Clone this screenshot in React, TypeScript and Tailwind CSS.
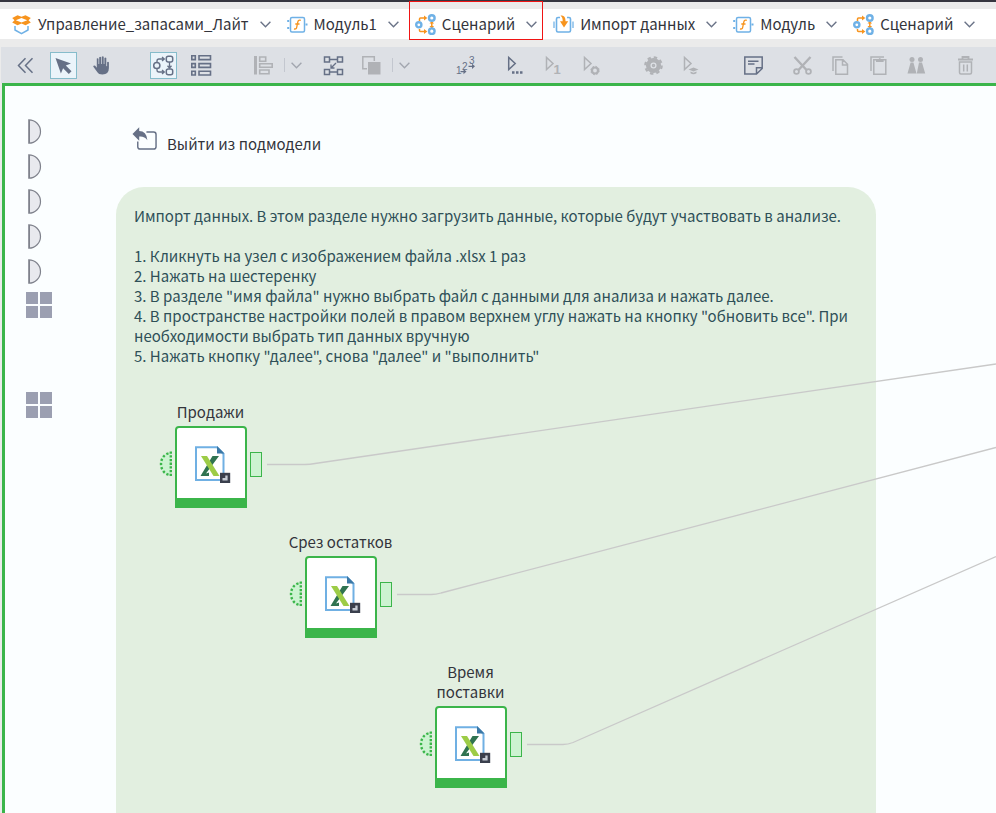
import type { ReactNode } from "react";
import clsx from "clsx";

/* ---------- breadcrumb icons ---------- */

function PackageIcon() {
  return (
    <svg width="21" height="21" viewBox="0 0 21 21" fill="none">
      <path d="M4 12v4l6.500 3.700L17 16v-4" stroke="#6fb1e6" strokeWidth="1.5" strokeLinejoin="round" />
      <path d="m10.500 2.800-4-1.600L1.200 3.900l2.300 2.300-2.300 2.400 5.300 2.700 4-1.800 4 1.800 5.300-2.700-2.300-2.400 2.300-2.300-5.300-2.700z" fill="#f7941e" />
      <path d="m4.800 6.200 5.700-2.300 5.700 2.300-5.700 2.300z" fill="#fff" />
    </svg>
  );
}

function ModuleIcon() {
  return (
    <svg width="21" height="21" viewBox="0 0 21 21" fill="none">
      <rect x="3.5" y="3.5" width="14" height="14.5" rx="1.5" stroke="#6fb1e6" strokeWidth="1.5" />
      <path d="M.2 7h2M.2 14h2M18.5 10.5h2" stroke="#6fb1e6" strokeWidth="2" />
      <path d="M13.8 6.3c-2.2-.7-2.8.5-3.2 2.500l-.8 4c-.3 1.800-1 2.600-2.800 2M8.300 10h4.200" stroke="#f7941e" strokeWidth="1.3" />
    </svg>
  );
}

function ScenarioIcon() {
  return (
    <svg width="21" height="21" viewBox="0 0 21 21" fill="none">
      <path d="M4.500 7V5q0-1 1-1H10M4.500 15v1.500q0 1 1 1H10M16.800 8v5.500" stroke="#f7941e" strokeWidth="1.500" />
      <path d="M9 1.500 12.300 4 9 6.500zM9 15l3.300 2.500L9 20zM14.500 9.500h4.600L16.800 7zM14.500 12h4.600l-2.300 2.600z" fill="#f7941e" />
      <g stroke="#6fb1e6" strokeWidth="2.400" fill="#fff">
        <circle cx="3.800" cy="10.800" r="2.600" />
        <circle cx="16.800" cy="4" r="2.800" />
        <circle cx="16.800" cy="17.200" r="2.800" />
      </g>
    </svg>
  );
}

function ImportIcon() {
  return (
    <svg width="21" height="21" viewBox="0 0 21 21" fill="none">
      <path d="M7 3.500H5Q3.500 3.500 3.500 5v11.500Q3.500 18 5 18h11q1.500 0 1.500-1.500V5q0-1.500-1.500-1.500h-2" stroke="#6fb1e6" strokeWidth="1.600" />
      <path d="M1 7.500v6.500M20 7.500v6.500" stroke="#9cc9ee" strokeWidth="1.800" />
      <path d="M7.500 1.500c3.800 0 5 1.700 5 5.700h2.700L11 13.500 7 7.200h2.700c0-3-.5-4-2.200-5.700z" fill="#f7941e" />
    </svg>
  );
}

function Chevron({ className }: { className?: string }) {
  return (
    <svg width="11" height="7" viewBox="0 0 11 7" fill="none" stroke="currentColor" strokeWidth="1.4" className={className}>
      <path d="M.6.8 5.500 5.700 10.400.8" />
    </svg>
  );
}

/* ---------- toolbar icons, all on a 21px grid ---------- */

function Icon({ children, solid }: { children: ReactNode; solid?: boolean }) {
  return (
    <svg
      width="21"
      height="21"
      viewBox="0 0 21 21"
      fill={solid ? "currentColor" : "none"}
      stroke={solid ? "none" : "currentColor"}
      strokeWidth="1.5"
      className="shrink-0 overflow-visible font-['Liberation_Sans',sans-serif]"
    >
      {children}
    </svg>
  );
}

const collapse = <Icon><path d="M10.500 3.300 3.500 10.500l7 7.200M17.500 3.300l-7 7.200 7 7.200" /></Icon>;

const pointer = <Icon solid><path d="M2.500 3 18 8.600l-5.200 2 5.700 5.700-2.700 2.700-5.700-5.800-2.200 5.300z" /></Icon>;

const hand = (
  <Icon solid>
    <path d="M5.800 3.500q1-.8 1.700.2V9h.7V2.300q1-1 1.900 0V9h.7V1.800q1-1 1.900 0V9h.7V3q1-1 1.900 0v8.300l.8-.3V7.300q.9-1 1.800 0v5.800q0 6.400-6.400 6.400-4 0-5.300-2.500L2.200 11.500q.4-1.500 2-.7l1.600 2z" />
  </Icon>
);

const flow = (
  <Icon>
    <circle cx="3.800" cy="10.500" r="3.100" />
    <rect x="13.300" y="1.200" width="6.400" height="5.800" rx="2" />
    <rect x="13.300" y="14" width="6.400" height="5.800" rx="2" />
    <path d="M4 7.400V6q0-2 2-2h5M9 2l2.300 2L9 6M4 13.600V15q0 2 2 2h5M9 15l2.300 2L9 19M16.500 7v6M14.500 10.800l2 2.200 2-2.200" strokeWidth="1.300" />
  </Icon>
);

const list = (
  <Icon>
    <path d="M.8.800h3.500v3.800H.800zM8 .800h11.500v3.800H8zM.8 8.600h3.500v3.800H.800zM8 8.600h11.500v3.800H8zM.8 16.200h3.500V20H.800zM8 16.200h11.500V20H8z" strokeWidth="1.600" />
  </Icon>
);

const align = (
  <Icon>
    <path d="M2.500 1v18.500" strokeWidth="3" />
    <path d="M6.700 2h6v4.300h-6zM6.700 8.800h12.500v3.500H6.700zM6.700 15h9.300v3.700H6.700z" strokeWidth="1.600" />
  </Icon>
);

const arrange = (
  <Icon>
    <path d="M1.500 2h5v5h-5zM14.500 2h5v5h-5zM1.500 14.500h5v5h-5zM14.500 14.500h5v5h-5z" />
    <path d="M6.500 4.500h8M6.500 17h8M13 8l-5 5M8 9.500V13h3.500" strokeWidth="1.300" />
  </Icon>
);

const overlay = (
  <Icon>
    <path d="M6 13.800H1.800V1.800h11.500V6" />
    <path d="M7 7h12.500v12.500H7z" fill="currentColor" stroke="none" />
  </Icon>
);

const order = (
  <Icon solid>
    <g fontSize="10">
      <text x="0" y="19">1</text>
      <text x="6" y="15">2</text>
      <text x="13" y="9">3</text>
    </g>
    <path d="M4.500 16h3v-2l3 2.600-3 2.600v-2h-3zM12.500 10.700h3.500v-2l3 2.600-3 2.600v-2h-3.500z" />
  </Icon>
);

const playDots = (
  <Icon>
    <path d="M3.700 2.500v12l6.500-6z" />
    <path d="M7 17.500h2.500M11 17.500h2.500M15 17.500h2.500" strokeWidth="2.600" />
  </Icon>
);

const playOne = (
  <Icon>
    <path d="M3.500 2.500v12l6.500-6z" />
    <text x="10.500" y="19" fontSize="13" fontWeight="700" fill="currentColor" stroke="none">1</text>
  </Icon>
);

const playGear = (
  <Icon>
    <path d="M3.500 2.500v12l6.500-6z" />
    <circle cx="14" cy="15.500" r="3" strokeWidth="2.200" />
    <circle cx="14" cy="15.500" r="4.200" strokeWidth="1" strokeDasharray="1.700 1.600" />
  </Icon>
);

const gear = (
  <Icon>
    <circle cx="10.500" cy="10.500" r="5.300" strokeWidth="4.500" />
    <circle cx="10.500" cy="10.500" r="8.200" strokeWidth="2.200" strokeDasharray="3.440 3" />
    <circle cx="10.500" cy="10.500" r="1" />
  </Icon>
);

const playHat = (
  <Icon>
    <path d="M3.500 2.500v12l6.500-6z" />
    <path d="m7.500 14.500 5-2 5 2-5 2zM9.500 16.500v1.800q3 1.700 6 0v-1.800l-3 1.200z" fill="currentColor" stroke="none" />
  </Icon>
);

const note = (
  <Icon>
    <path d="M1.800 2h17.400v11.500L13.500 19H1.800zM19.200 12.700h-5.700V19" />
    <path d="M5 6.300h10.500M5 9h6.500" strokeWidth="1.400" />
  </Icon>
);

const scissors = (
  <Icon>
    <path d="M2.500 2 14.500 15M18.500 2l-12 13" strokeWidth="2.400" />
    <circle cx="4.500" cy="16.500" r="2.400" strokeWidth="1.800" />
    <circle cx="16.500" cy="16.500" r="2.400" strokeWidth="1.800" />
  </Icon>
);

const copy = (
  <Icon>
    <path d="M3 16V2h9.500M5.800 4.700H13l4.500 4.600v9.900H5.800zM12.500 5v5h5" />
  </Icon>
);

const paste = (
  <Icon>
    <path d="M3 16V2h13M5.800 4.700h12v14.500h-12z" />
    <path d="M8 7V4.500h2.300q1.500-3 3 0h2.300V7z" fill="currentColor" stroke="none" />
  </Icon>
);

const people = (
  <Icon solid>
    <circle cx="6" cy="4.500" r="2.500" />
    <circle cx="14.500" cy="4.500" r="2.500" />
    <path d="M4.600 7.500h2.800l3.100 11h-9zM13 7.500h3l3.200 11h-8.400z" />
  </Icon>
);

const trash = (
  <Icon>
    <path d="M3 4.500h15M7.500 4V2h6v2" strokeWidth="1.800" />
    <path d="M4.500 7h12v10.500q0 1.500-1.500 1.500H6q-1.500 0-1.500-1.500zM8.700 9.500v7M12.300 9.500v7" />
  </Icon>
);

/* ---------- bars ---------- */

const crumbs = [
  { label: "Управление_запасами_Лайт", icon: <PackageIcon /> },
  { label: "Модуль1", icon: <ModuleIcon /> },
  { label: "Сценарий", icon: <ScenarioIcon />, marked: true },
  { label: "Импорт данных", icon: <ImportIcon /> },
  { label: "Модуль", icon: <ModuleIcon /> },
  { label: "Сценарий", icon: <ScenarioIcon /> },
];

function Breadcrumbs() {
  return (
    <nav className="flex h-[30px] shrink-0 items-center gap-4 bg-white pl-[11px]">
      {crumbs.map((c, i) => (
        <button key={i} type="button" className="relative flex h-full shrink-0 items-center whitespace-nowrap text-[#33343b]">
          {c.icon}
          <span className="ml-1.5 mr-[11px]">{c.label}</span>
          <Chevron className="text-[#6b7488]" />
          {c.marked && <span className="absolute -inset-x-1.5 -bottom-px -top-2 border border-[#f01414]" />}
        </button>
      ))}
    </nav>
  );
}

interface ToolProps {
  label: string;
  children: ReactNode;
  active?: boolean;
  disabled?: boolean;
}

function Tool({ label, children, active, disabled }: ToolProps) {
  return (
    <button
      type="button"
      aria-label={label}
      disabled={disabled}
      className={clsx(
        "flex size-[27px] shrink-0 items-center justify-center border",
        active ? "border-[#86bccb] bg-[#ebf4fa]" : "border-transparent",
        disabled ? "text-[#b0b2b6]" : "text-[#667086]",
      )}
    >
      {children}
    </button>
  );
}

function Split({ label }: { label: string }) {
  return (
    <div className="-ml-1 flex shrink-0 items-center gap-1.5">
      <span className="h-3.5 w-px bg-[#c3c7cf]" />
      <button type="button" aria-label={label} className="flex h-[27px] items-center text-[#a2a6af]">
        <Chevron />
      </button>
    </div>
  );
}

function Group({ children }: { children: ReactNode }) {
  return <div className="flex shrink-0 items-center gap-[11px]">{children}</div>;
}

function Toolbar() {
  return (
    <div className="ml-px flex h-9 shrink-0 items-center gap-[35px] overflow-hidden bg-[#dde0e5] pl-[11px]">
      <Group>
        <Tool label="Свернуть">{collapse}</Tool>
        <Tool label="Выбор" active>{pointer}</Tool>
        <Tool label="Перемещение">{hand}</Tool>
      </Group>
      <Group>
        <Tool label="Схема" active>{flow}</Tool>
        <Tool label="Список">{list}</Tool>
      </Group>
      <div className="flex shrink-0 items-center gap-[18px]">
        <Group>
          <Tool label="Выровнять" disabled>{align}</Tool>
          <Split label="Варианты выравнивания" />
        </Group>
        <Group>
          <Tool label="Упорядочить">{arrange}</Tool>
          <Tool label="Порядок слоёв" disabled>{overlay}</Tool>
          <Split label="Варианты порядка" />
        </Group>
      </div>
      <div className="ml-2 flex shrink-0 items-center gap-[22px]">
        <Tool label="Порядок выполнения">{order}</Tool>
        <Group>
          <Tool label="Выполнить">{playDots}</Tool>
          <Tool label="Выполнить узел" disabled>{playOne}</Tool>
          <Tool label="Выполнить с настройкой" disabled>{playGear}</Tool>
        </Group>
      </div>
      <Group>
        <Tool label="Настройки" disabled>{gear}</Tool>
        <Tool label="Обучить" disabled>{playHat}</Tool>
      </Group>
      <div className="flex shrink-0 items-center gap-[22px]">
        <Tool label="Примечание">{note}</Tool>
        <Group>
          <Tool label="Вырезать" disabled>{scissors}</Tool>
          <Tool label="Копировать" disabled>{copy}</Tool>
          <Tool label="Вставить" disabled>{paste}</Tool>
          <Tool label="Дублировать" disabled>{people}</Tool>
        </Group>
        <Tool label="Удалить" disabled>{trash}</Tool>
      </div>
    </div>
  );
}

/* ---------- canvas ---------- */

function InputPort() {
  return (
    <svg width="14" height="25" viewBox="0 0 14 25" fill="#e8e9ee" stroke="#7f828c" strokeWidth="1.200">
      <path d="M.8.800a11.700 11.700 0 0 1 0 23.400z" />
      <path d="M1.500 1v23" strokeWidth="1" />
    </svg>
  );
}

function VariablesPort() {
  return (
    <div className="grid size-[26px] grid-cols-2 gap-0.5">
      {[0, 1, 2, 3].map((i) => (
        <span key={i} className="bg-[#9b9fb1]" />
      ))}
    </div>
  );
}

function ExcelIcon() {
  return (
    <svg width="37" height="38" viewBox="0 0 37 38" fill="none">
      <path d="M2 2.200h21L29.500 9v26H2z" fill="#fff" stroke="#70b0e3" strokeWidth="2" />
      <path d="M23 1v7.500h7.500z" fill="#3c78a5" />
      <path d="M6.500 31 18.500 11H25L12 28.500l3-1v3.500z" fill="#2f7350" />
      <path d="M7 11h6l12.500 20h-6z" fill="#9dcc46" />
      <path d="M26 27.800h10.200V38H26z" fill="#3a3f4d" />
      <path d="M31.300 30.500h2.300v5H28.500v-2.400h2.800z" fill="#c6ccd6" />
    </svg>
  );
}

interface NodeProps {
  label: string;
  left: number;
  top: number;
}

function ImportNode({ label, left, top }: NodeProps) {
  return (
    <div className="absolute flex items-center" style={{ left, top }}>
      <div className="absolute bottom-full left-1/2 mb-1 w-[110px] -translate-x-1/2 text-center text-[#33343b]">{label}</div>
      <svg width="13" height="26" viewBox="0 0 13 26" className="-mt-1.5 mr-[3px]">
        <path d="M12 1.500A11 11.500 0 0 0 12 24.500z" fill="#ccf3d1" />
        <g fill="none" stroke="#3bb54a" strokeWidth="2.400">
          <path d="M9.500 2.300C-.5 5-.5 21 9.500 23.700" strokeDasharray="2.300 2" />
          <path d="M11.800 .5v25" strokeDasharray="2.300 1.400" />
        </g>
      </svg>
      <button
        type="button"
        aria-label={label}
        className="flex h-[82px] w-[72px] items-center justify-center rounded-t border-2 border-b-[10px] border-[#3bb54a] bg-white pl-[3px] pt-0.5"
      >
        <ExcelIcon />
      </button>
      <span className="-mt-1.5 ml-[3px] h-[25px] w-3 border border-[#3bb54a] bg-[#ccf3d1]" />
    </div>
  );
}

const nodes: NodeProps[] = [
  { label: "Продажи", left: 154, top: 340 },
  { label: "Срез остатков", left: 284, top: 470 },
  { label: "Время поставки", left: 414, top: 620 },
];

const wires = [
  "M262 378.500h38q5 0 10-1L991 278",
  "M392 508.500h34q5 0 10-1.500L991 361.500",
  "M522 658.500h36q5 0 10-2L991 470.500",
];

function Canvas() {
  return (
    <main className="relative ml-0.5 min-h-[727px] flex-1 overflow-hidden border-l-[3px] border-t-[3px] border-[#3bb54a] bg-[#fbfeff]">
      <section className="absolute bottom-0 left-[111px] top-[101px] w-[760px] rounded-t-[28px] bg-[#e2efe0] px-[18px] pt-[19px] text-[#2f5058]">
        <p>Импорт данных. В этом разделе нужно загрузить данные, которые будут участвовать в анализе.</p>
        <ol className="mt-5">
          <li>1. Кликнуть на узел с изображением файла .xlsx 1 раз</li>
          <li>2. Нажать на шестеренку</li>
          <li>3. В разделе "имя файла" нужно выбрать файл с данными для анализа и нажать далее.</li>
          <li>
            4. В пространстве настройки полей в правом верхнем углу нажать на кнопку "обновить все". При необходимости
            выбрать тип данных вручную
          </li>
          <li>5. Нажать кнопку "далее", снова "далее" и "выполнить"</li>
        </ol>
      </section>

      <div className="absolute left-[21px] top-[33px]">
        <div className="flex flex-col gap-[10px] pl-0.5">
          {[0, 1, 2, 3, 4].map((i) => (
            <InputPort key={i} />
          ))}
        </div>
        <div className="mt-2 flex flex-col gap-[74px]">
          <VariablesPort />
          <VariablesPort />
        </div>
      </div>

      <button type="button" className="absolute left-[127px] top-10 flex items-start gap-[10px] text-[#33343b]">
        <svg width="25" height="25" viewBox="0 0 26 25" fill="none">
          <path d="M15 5.800h7.500q2.500 0 2.500 2.500V21q0 2.500-2.500 2.500H8.500Q6 23.500 6 21v-5.500" stroke="#667086" strokeWidth="1.500" />
          <path d="M.5 7.700 7.500.800v4q7.500 0 8.500 9.400Q13 10 7.500 10.500v4.300z" fill="#667086" />
        </svg>
        <span className="pt-2">Выйти из подмодели</span>
      </button>

      <svg className="pointer-events-none absolute inset-0 size-full" fill="none" stroke="#c9c9c9" strokeWidth="1.300">
        {wires.map((d) => (
          <path key={d} d={d} />
        ))}
      </svg>

      {nodes.map((n) => (
        <ImportNode key={n.label} {...n} />
      ))}
    </main>
  );
}

export default function App() {
  return (
    <div className="flex h-screen flex-col overflow-hidden bg-[#ebebeb] font-['Noto_Sans_CJK_SC',sans-serif] text-[15px] leading-5">
      <div className="mb-[7px] h-0.5 shrink-0 bg-[#363640]" />
      <Breadcrumbs />
      <div className="h-2 shrink-0" />
      <Toolbar />
      <Canvas />
    </div>
  );
}
